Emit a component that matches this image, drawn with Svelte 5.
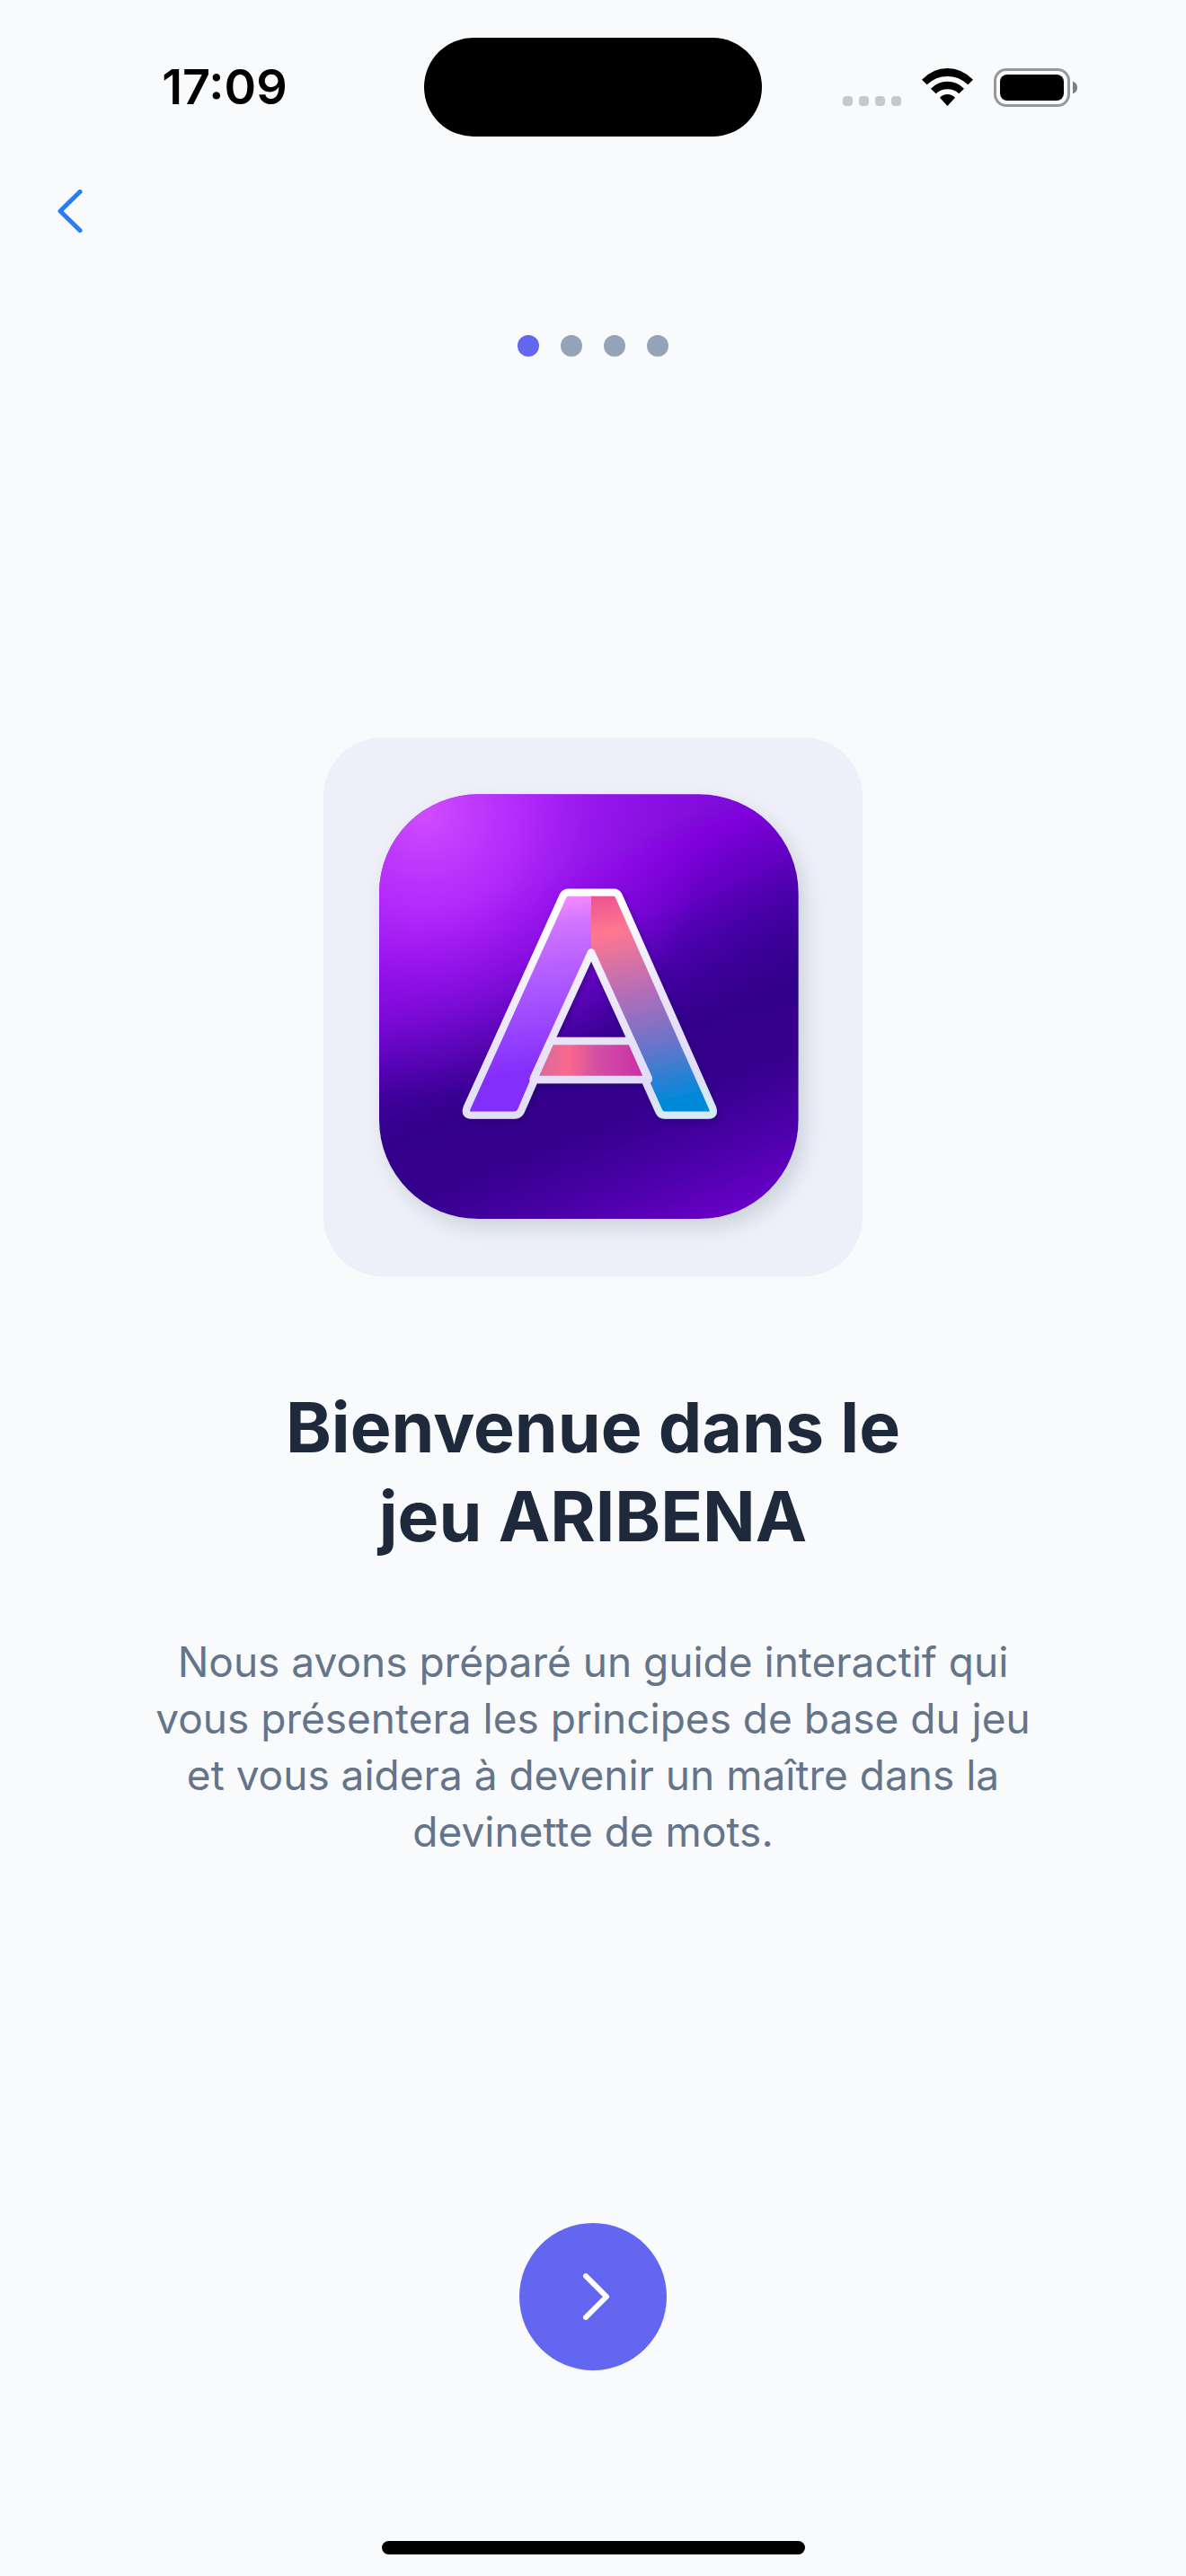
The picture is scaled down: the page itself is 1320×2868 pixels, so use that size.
<script lang="ts">
	const steps = [
		{
			title: ['Bienvenue dans le', 'jeu ARIBENA'],
			text: 'Nous avons préparé un guide interactif qui vous présentera les principes de base du jeu et vous aidera à devenir un maître dans la devinette de mots.'
		}
	];
	const total = 4;

	let current = $state(0);
	let step = $derived(steps[Math.min(current, steps.length - 1)]);

	function next() {
		if (current < total - 1) current += 1;
	}

	function back() {
		if (current > 0) current -= 1;
	}
</script>

<div class="screen">
	<header class="status">
		<div class="side left">
			<time>17:09</time>
		</div>
		<div class="island"></div>
		<div class="side right">
			<div class="signal">
				{#each Array(4) as _}
					<span></span>
				{/each}
			</div>
			<svg class="wifi" width="57" height="42" viewBox="0 0 171 126" aria-hidden="true">
				<path d="M0 38Q38 0 85.500 0T171 38L154 55Q125 27 85.500 27T17 55Z" />
				<path d="M30 68Q53 44 85.500 44T141 68L124 85Q108 70 85.500 70T47 85Z" />
				<path d="M60 98Q70 87 85.500 87T111 98L85.500 126Z" />
			</svg>
			<svg class="battery" width="93" height="43" viewBox="0 0 93 43" aria-hidden="true">
				<rect x="1.500" y="1.500" width="82" height="40" rx="12.500" fill="none" stroke="#97989a" stroke-width="3" />
				<rect x="7" y="7" width="71" height="29" rx="8" />
				<path d="M88 14.500Q93 16.500 93 21.500T88 28.500Z" fill="#7d7e80" />
			</svg>
		</div>
	</header>

	<nav>
		<button class="back" aria-label="Retour" onclick={back}>
			<svg width="28" height="48" viewBox="0 0 28 48" aria-hidden="true">
				<path d="M25 2.500L3 24L25 45.500" />
			</svg>
		</button>
	</nav>

	<div class="dots">
		{#each Array(total) as _, i}
			<span class:active={i === current}></span>
		{/each}
	</div>

	<main>
		<svg class="logo" viewBox="0 0 1800 1800" role="img" aria-label="ARIBENA">
			<defs>
				<linearGradient id="tile" gradientUnits="userSpaceOnUse" x1="186" y1="190" x2="824" y2="1808">
					<stop offset="0" stop-color="#8a0ce2" />
					<stop offset="0.3" stop-color="#7e06da" />
					<stop offset="0.4" stop-color="#6902ca" />
					<stop offset="0.455" stop-color="#5700b8" />
					<stop offset="0.5" stop-color="#4a00aa" />
					<stop offset="0.56" stop-color="#3d0099" />
					<stop offset="0.63" stop-color="#33008a" />
					<stop offset="0.76" stop-color="#37008f" />
					<stop offset="0.89" stop-color="#4e00ac" />
					<stop offset="1" stop-color="#6900c8" />
				</linearGradient>
				<radialGradient id="shine" gradientUnits="userSpaceOnUse" cx="336" cy="250" r="960">
					<stop offset="0" stop-color="#d04cff" />
					<stop offset="0.35" stop-color="#b82eff" stop-opacity="0.85" />
					<stop offset="0.6" stop-color="#a81ff8" stop-opacity="0.5" />
					<stop offset="1" stop-color="#9a14ee" stop-opacity="0" />
				</radialGradient>
				<radialGradient id="shade" gradientUnits="userSpaceOnUse" cx="1620" cy="700" r="480">
					<stop offset="0" stop-color="#31008a" stop-opacity="0.4" />
					<stop offset="1" stop-color="#31008a" stop-opacity="0" />
				</radialGradient>
				<linearGradient id="leftLeg" gradientUnits="userSpaceOnUse" x1="430" y1="100" x2="520" y2="740">
					<stop offset="0" stop-color="#fa90ff" />
					<stop offset="0.16" stop-color="#d073ff" />
					<stop offset="0.5" stop-color="#a855ff" />
					<stop offset="0.9" stop-color="#842dfc" />
				</linearGradient>
				<linearGradient id="rightLeg" gradientUnits="userSpaceOnUse" x1="540" y1="90" x2="700" y2="830">
					<stop offset="0" stop-color="#ea4d92" />
					<stop offset="0.19" stop-color="#ff7790" />
					<stop offset="0.48" stop-color="#b36db8" />
					<stop offset="0.72" stop-color="#6a74ca" />
					<stop offset="0.98" stop-color="#0089d9" />
				</linearGradient>
				<linearGradient id="bar">
					<stop offset="0" stop-color="#cf6ba4" />
					<stop offset="0.3" stop-color="#fa698c" />
					<stop offset="0.55" stop-color="#d350a4" />
					<stop offset="1" stop-color="#ca2ca6" />
				</linearGradient>
				<linearGradient id="edge" gradientUnits="userSpaceOnUse" x1="400" y1="90" x2="640" y2="860">
					<stop offset="0.1" stop-color="#ffffff" />
					<stop offset="0.5" stop-color="#ebe6fa" />
					<stop offset="0.9" stop-color="#dfdcf8" />
					<stop offset="1" stop-color="#d5e9f6" />
				</linearGradient>
				<filter id="tileShadow" x="-20%" y="-20%" width="140%" height="140%">
					<feDropShadow dx="22" dy="30" stdDeviation="32" flood-color="#9aa8b0" flood-opacity="0.4" />
				</filter>
				<filter id="letterShadow" x="-20%" y="-20%" width="140%" height="140%">
					<feDropShadow dx="6" dy="10" stdDeviation="9" flood-color="#1c0060" flood-opacity="0.5" />
				</filter>
			</defs>

			<rect x="186" y="190" width="1400" height="1418" rx="330" fill="url(#tile)" filter="url(#tileShadow)" />
			<rect x="186" y="190" width="1400" height="1418" rx="330" fill="url(#shade)" />
			<rect x="186" y="190" width="1400" height="1418" rx="330" fill="url(#shine)" />

			<!-- two folded legs, then the crossbar and the light outline -->
			<g transform="translate(390 417)" filter="url(#letterShadow)">
				<path d="M504 101H428Q416 101 410 112L89 820Q80 845 105 845H248Q262 845 269 832L311 735V726L504 301Z" fill="url(#leftLeg)" />
				<path d="M504 101H579Q590 101 596 112L909 820Q918 845 894 845H749Q736 845 730 832L688 738L695 722L504 301Z" fill="url(#rightLeg)" />
				<g stroke="url(#edge)" stroke-width="25" stroke-linejoin="round">
					<path d="M369 597H638L695 726H311Z" fill="url(#bar)" />
					<path
						d="M428 101H579Q590 101 596 112L909 820Q918 845 894 845H749Q736 845 730 832L688 738L695 720L504 301L312 720L311 735L269 832Q262 845 248 845H105Q80 845 89 820L410 112Q416 101 428 101Z"
						fill="none"
					/>
				</g>
			</g>
		</svg>

		<h1>{step.title[0]}<br />{step.title[1]}</h1>
		<p>{step.text}</p>
	</main>

	<footer>
		<button class="next" aria-label="Suivant" onclick={next}>
			<svg width="30" height="52" viewBox="0 0 30 52" aria-hidden="true">
				<path d="M3 3L26 26L3 49" />
			</svg>
		</button>
		<div class="home"></div>
	</footer>
</div>

<style>
	:global(body) {
		margin: 0;
		background: #f8fafc;
	}

	.screen {
		display: flex;
		flex-direction: column;
		box-sizing: border-box;
		min-height: 100vh;
		padding: 42px 0 24px;
		font-family: Inter, 'Liberation Sans', sans-serif;
	}

	button {
		display: flex;
		align-items: center;
		justify-content: center;
		box-sizing: border-box;
		border: 0;
		padding: 0;
		background: none;
		cursor: pointer;
	}

	.status {
		display: grid;
		grid-template-columns: 1fr 376px 1fr;
		align-items: center;
	}

	.side {
		display: flex;
		align-items: center;
		justify-content: center;
	}

	.left {
		padding-left: 28px;
	}

	.right {
		gap: 23px;
		padding-right: 32px;
	}

	time {
		font-size: 54px;
		font-weight: 600;
		line-height: 64px;
	}

	.island {
		height: 110px;
		border-radius: 56px;
		background: #000;
	}

	.signal {
		display: flex;
		align-self: flex-end;
		gap: 7px;
		padding-bottom: 1px;
	}

	.signal span {
		width: 11px;
		height: 11px;
		border-radius: 4px;
		background: #c7c8ca;
	}

	nav {
		display: flex;
		margin-top: 25px;
		padding: 0 48px;
	}

	.back {
		width: 60px;
		height: 116px;
	}

	.back path {
		fill: none;
		stroke: #2b7bf6;
		stroke-width: 5;
		stroke-linecap: round;
		stroke-linejoin: round;
	}

	.dots {
		display: flex;
		justify-content: center;
		gap: 24px;
		margin-top: 80px;
	}

	.dots span {
		width: 24px;
		height: 24px;
		border-radius: 50%;
		background: #94a3b8;
	}

	.dots .active {
		background: #6366f1;
	}

	main {
		display: flex;
		flex: 1;
		flex-direction: column;
		align-items: center;
		justify-content: center;
		padding: 20px 160px 0;
		text-align: center;
	}

	.logo {
		width: 600px;
		max-width: 100%;
		border-radius: 66px;
		background: #eeeff8;
	}

	h1 {
		margin: 119px 0 81px;
		color: #1e293b;
		font-size: 77px;
		font-weight: 700;
		line-height: 99px;
	}

	p {
		margin: 0;
		color: #64748b;
		font-size: 46px;
		line-height: 63px;
	}

	footer {
		display: flex;
		flex-direction: column;
		align-items: center;
		gap: 190px;
	}

	.next {
		width: 164px;
		height: 164px;
		padding-left: 8px;
		border-radius: 50%;
		background: #6366f1;
	}

	.next path {
		fill: none;
		stroke: #fff;
		stroke-width: 6;
		stroke-linecap: round;
		stroke-linejoin: round;
	}

	.home {
		width: 471px;
		height: 15px;
		border-radius: 8px;
		background: #000;
	}
</style>
